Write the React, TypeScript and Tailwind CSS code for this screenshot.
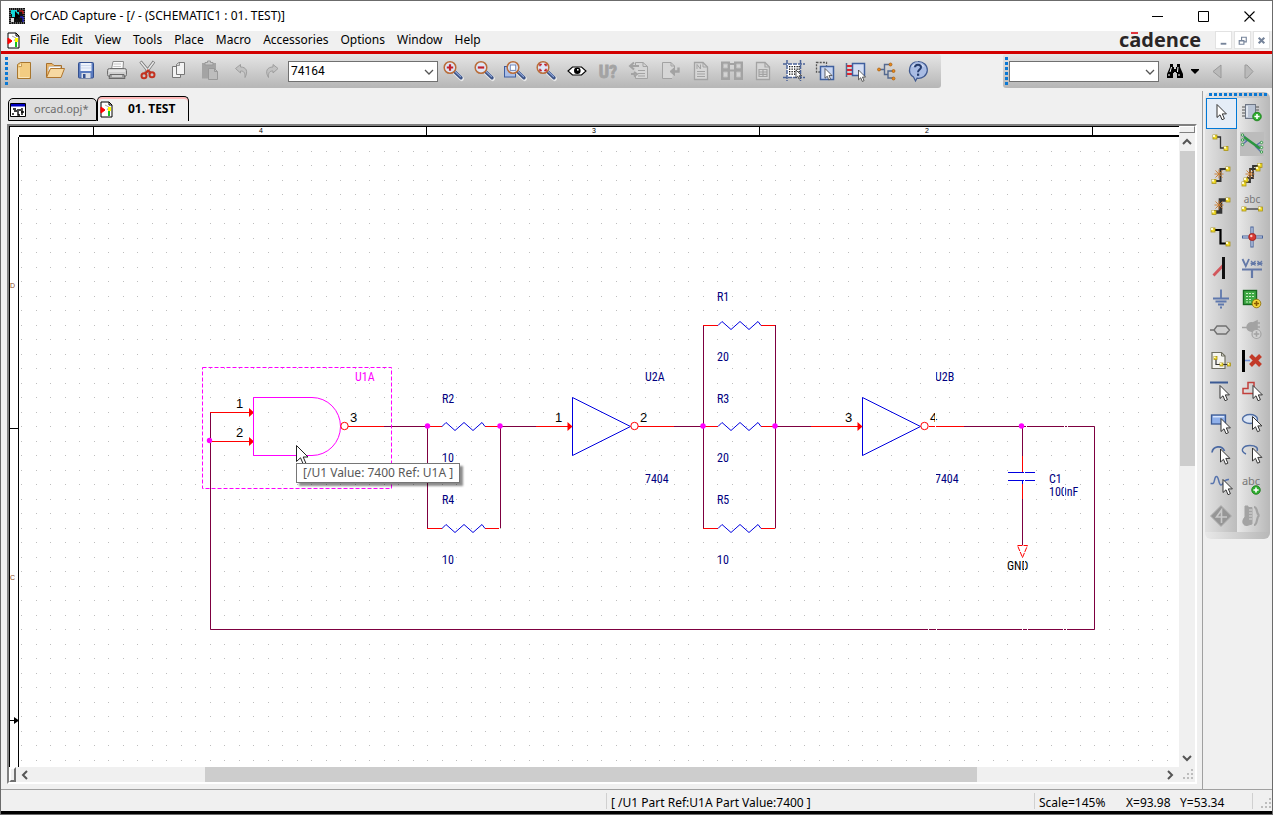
import React from "react";

type IconDef = { label: string; art: React.ReactNode };

const POINTER = "M0 0V13L3 10.3L5 15.2L7.4 14.2L5.3 9.4H9.4Z";

function Icon({ children }: { children: React.ReactNode }) {
  return (
    <svg width="24" height="24" viewBox="0 0 24 24" fill="none" className="shrink-0 overflow-visible" aria-hidden="true">
      {children}
    </svg>
  );
}

function Pointer({ x, y }: { x: number; y: number }) {
  return <path d={POINTER} transform={`translate(${x} ${y})`} fill="#fff" stroke="#333" strokeWidth="1" />;
}

function Pad({ x, y, s = 4 }: { x: number; y: number; s?: number }) {
  return (
    <g>
      <rect x={x - s / 2} y={y - s / 2} width={s} height={s} fill="#f0dc28" stroke="#a8921a" strokeWidth="0.8" />
      <rect x={x - s / 2} y={y - s / 2} width={s / 2} height={s / 2} fill="#fffbd0" />
    </g>
  );
}

function Spark({ x, y }: { x: number; y: number }) {
  return (
    <path
      d={`M${x - 4.5} ${y}h9M${x} ${y - 4.5}v9M${x - 3.5} ${y - 3.5}l7 7M${x + 3.5} ${y - 3.5}l-7 7`}
      stroke="#c8792a"
      strokeWidth="0.9"
    />
  );
}

function Plus({ x, y, color, ring }: { x: number; y: number; color: string; ring: string }) {
  return (
    <g>
      <circle cx={x} cy={y} r="4.3" fill={color} stroke={ring} strokeWidth="0.8" />
      <path d={`M${x - 2.6} ${y}h5.2M${x} ${y - 2.6}v5.2`} stroke={ring === "#8a6a00" ? "#8a5a00" : "#fff"} strokeWidth="1.6" />
    </g>
  );
}

function Lens({ children }: { children?: React.ReactNode }) {
  return (
    <g>
      <path d="M13.5 13L20.5 19.5" stroke="#e9e9e9" strokeWidth="5" strokeLinecap="round" />
      <path d="M13.5 12.5L20 18.8" stroke="#3d5487" strokeWidth="3.4" strokeLinecap="round" />
      <path d="M14 12.2L19.6 17.6" stroke="#8fa6d8" strokeWidth="1.2" strokeLinecap="round" />
      <circle cx="9" cy="8.5" r="5.8" fill="#dfe6f6" stroke="#b96d3a" strokeWidth="1.5" />
      {children}
    </g>
  );
}

const G = "#a3a3a3";

const editIcons: IconDef[] = [
  {
    label: "New",
    art: (
      <g>
        <path d="M5.5 5.5L8.5 3.5H18.5V19.5H5.5Z" fill="#f2cc82" stroke="#a8762e" />
        <path d="M6.5 7.5H9.5V4.5" fill="#fff3d6" stroke="#b98a42" strokeWidth="0.8" />
        <path d="M7 9V18.5H17" stroke="#fbe7ba" />
      </g>
    ),
  },
  {
    label: "Open",
    art: (
      <g>
        <path d="M3.5 18V4.5H9L11 6.5H18.5V10" fill="#e9b56a" stroke="#a8702c" />
        <path d="M6 7.5H17.5V12H5Z" fill="#fafafa" stroke="#bbb" strokeWidth="0.6" />
        <path d="M3.5 18.5L7.5 9.5H21.5L18 18.5Z" fill="#f7d9a2" stroke="#b0762f" />
      </g>
    ),
  },
  {
    label: "Save",
    art: (
      <g>
        <rect x="4.5" y="3.5" width="15" height="15.5" rx="1" fill="#5b7cc0" stroke="#34508f" />
        <rect x="6.5" y="4" width="11" height="8" fill="#eef2fb" />
        <path d="M7 6.5H17M7 9H17" stroke="#c3cfe8" strokeWidth="0.8" />
        <rect x="7.5" y="14" width="9" height="5" fill="#d9dde6" />
        <rect x="9" y="15" width="2.5" height="4" fill="#34508f" />
      </g>
    ),
  },
  {
    label: "Print",
    art: (
      <g>
        <path d="M6.5 10L8 2.5H18.5L18 10Z" fill="#fafafa" stroke="#8a8a8a" />
        <path d="M8.5 5H16M8.3 7.5H16" stroke="#c6c6c6" />
        <rect x="2.5" y="9.5" width="19" height="8" rx="2" fill="#cfcfcf" stroke="#6e6e6e" />
        <path d="M4 12H20" stroke="#f5f5f5" />
        <path d="M5 15.5H19L20 19.5H4Z" fill="#9d9d9d" stroke="#696969" />
        <path d="M7 17H17" stroke="#e9e9e9" strokeWidth="1.4" />
      </g>
    ),
  },
  {
    label: "Cut",
    art: (
      <g>
        <path d="M4.5 2.5L14 14M18 2.5L9.5 14" stroke="#777" strokeWidth="3" />
        <path d="M4.8 3L14 14M17.7 3L9.5 14" stroke="#e8e8e8" strokeWidth="1.5" />
        <circle cx="8" cy="16.8" r="2.5" stroke="#c4311f" strokeWidth="2" />
        <circle cx="16" cy="15.8" r="2.5" stroke="#c4311f" strokeWidth="2" />
        <path d="M9 14.5L12 11.5L14.5 14" stroke="#c4311f" strokeWidth="2" />
      </g>
    ),
  },
  {
    label: "Copy",
    art: (
      <g fill="#f3f3f3" stroke="#777">
        <path d="M5.5 7.5H13.5V18.5H5.5Z" />
        <path d="M9.5 5.5L12 3.5H17.5V15.5H9.5Z" />
        <path d="M10 6.5H12.5V4" fill="#ccc" strokeWidth="0.7" />
      </g>
    ),
  },
  {
    label: "Paste",
    art: (
      <g>
        <rect x="4" y="4" width="14" height="15.5" fill="#a4a4a4" />
        <path d="M7 6V3.5H9.5V2H12.5V3.5H15V6Z" fill="#c8c8c8" stroke="#999" />
        <path d="M10.5 9.5H16.5L19.5 12.5V20.5H10.5Z" fill="#bdbdbd" stroke="#999" />
        <path d="M16.5 9.5V12.5H19.5" stroke="#999" />
      </g>
    ),
  },
  {
    label: "Undo",
    art: <path d="M6.5 9.5L11.5 5.5V8C17 8 19.5 12 16 18.5C16.2 13.5 15 12 11.5 12V14Z" fill="#c2c2c2" stroke="#9e9e9e" />,
  },
  {
    label: "Redo",
    art: <path d="M18 9.5L13 5.5V8C7.5 8 4.5 12 8.5 18.5C8.2 13.5 9.5 12 13 12V14Z" fill="#c2c2c2" stroke="#9e9e9e" />,
  },
];

const viewIcons: IconDef[] = [
  { label: "Zoom in", art: <Lens><path d="M5.8 8.5H12.2M9 5.3V11.7" stroke="#c3222d" strokeWidth="2.2" /></Lens> },
  { label: "Zoom out", art: <Lens><path d="M5.8 8.5H12.2" stroke="#c3222d" strokeWidth="2.2" /></Lens> },
  {
    label: "Zoom to region",
    art: (
      <g>
        <rect x="1.5" y="7.5" width="11" height="10.5" fill="#a9bde6" stroke="#3c5da0" />
        <g transform="translate(1 0)"><Lens><rect x="6.3" y="6" width="5.4" height="5.4" fill="#fff" stroke="#7288ba" /></Lens></g>
      </g>
    ),
  },
  {
    label: "Zoom to all",
    art: (
      <Lens>
        <path d="M6 7.3V5.5H7.8M10.2 5.5H12V7.3M12 9.7V11.5H10.2M7.8 11.5H6V9.7" stroke="#c3222d" strokeWidth="1.5" />
      </Lens>
    ),
  },
  {
    label: "View",
    art: (
      <g>
        <path d="M3 12L7.5 8H16.5L21 12L16.5 16H7.5Z" fill="#fff" stroke="#000" strokeWidth="1.1" />
        <circle cx="12.3" cy="11.8" r="3.3" fill="#000" />
        <rect x="12" y="10" width="1.6" height="1.6" fill="#fff" />
      </g>
    ),
  },
  {
    label: "Annotate",
    art: (
      <text x="12" y="19" textAnchor="middle" fontSize="18" fontWeight="bold" fill={G} stroke={G} strokeWidth="0.8" fontFamily="Roboto Condensed, Liberation Sans, sans-serif">
        U?
      </text>
    ),
  },
  {
    label: "Back annotate",
    art: (
      <g stroke={G}>
        <path d="M8.5 7V3.5H16L20.5 7.5V19.5H8.5V16" fill="#d6d6d6" />
        <path d="M16 3.5V7.5H20.5M11 11.5H18M11 14.5H18M11 17H18" />
        <path d="M12 7H4M7 3.5L3 7L7 10.5M4 15H8M7 13L10 15L7 17.5" strokeWidth="2" />
      </g>
    ),
  },
  {
    label: "Design rules check",
    art: (
      <g stroke={G}>
        <path d="M14 19.5H4.5V3.5H13L16.5 7V10" fill="#d6d6d6" />
        <path d="M13 3.5V7H16.5" />
        <path d="M20.5 8.5V12.5H16" strokeWidth="2.4" />
        <path d="M16.5 8.5L12 12.5L16.5 16.5Z" fill={G} />
      </g>
    ),
  },
  {
    label: "Create netlist",
    art: (
      <g stroke={G}>
        <path d="M5.5 3.5H14L18.5 8V20.5H5.5Z" fill="#d6d6d6" strokeWidth="1.3" />
        <path d="M8 10V5.5L11.5 10V5.5M14 3.5V8H18.5M8 12.5H16M8 15H16M8 17.5H16" />
      </g>
    ),
  },
  {
    label: "Cross reference",
    art: (
      <g>
        <path d="M1 2.5H10V21H1ZM14 2.5H23V21H14Z" fill={G} />
        <path d="M3.5 5H7.5V9H3.5ZM3.5 13H7.5V18H3.5ZM16.5 5H20.5V9H16.5ZM16.5 13H20.5V18H16.5Z" fill="#d3d3d3" stroke="#bdbdbd" />
        <path d="M9 11.5H15M10 5H14" stroke={G} strokeWidth="2" />
      </g>
    ),
  },
  {
    label: "Bill of materials",
    art: (
      <g stroke={G}>
        <path d="M5.5 3.5H14L18.5 8V20.5H5.5Z" fill="#d6d6d6" strokeWidth="1.3" />
        <path d="M14 3.5V8H18.5M8 10.5H16V17.5H8ZM8 13H16M8 15.3H16M12 10.5V17.5" strokeWidth="1.2" />
      </g>
    ),
  },
  {
    label: "Snap to grid",
    art: (
      <g>
        <rect x="5" y="5" width="13" height="13" fill="#fff" />
        <path d="M5 1V22M18.5 1V22M1 5H23M1 18.5H23" stroke="#4b6398" strokeWidth="1.5" strokeDasharray="4 1" />
        <g fill="#111">
          {[7, 9.5, 12, 14.5].map((y) => [7, 9.5, 12, 14.5, 16.5].map((x) => <rect key={`${x}-${y}`} x={x} y={y} width="1.3" height="1.3" />))}
        </g>
        <g transform="translate(14 11) scale(0.6)"><path d={POINTER} fill="#fff" stroke="#333" strokeWidth="1.3" /></g>
      </g>
    ),
  },
  {
    label: "Area select",
    art: (
      <g>
        <rect x="3.5" y="3.5" width="10" height="9.5" stroke="#555" strokeWidth="1.3" strokeDasharray="2 1.2" />
        <rect x="7.5" y="7.5" width="13" height="13" fill="#c9d6f1" stroke="#3f5f9e" strokeWidth="1.5" />
        <g transform="translate(12 9.5) scale(0.75)"><path d={POINTER} fill="#fff" stroke="#333" /></g>
      </g>
    ),
  },
  {
    label: "Drag connected object",
    art: (
      <g>
        <path d="M2.5 4V18" stroke="#52668f" strokeWidth="1.5" />
        <path d="M3 7H9M3 11H9M3 15H9" stroke="#dc2430" strokeWidth="1.8" />
        <rect x="8.5" y="4.5" width="12" height="12" fill="#d4def4" stroke="#3f5f9e" strokeWidth="1.5" />
        <g transform="translate(14.5 11) scale(0.75)"><path d={POINTER} fill="#fff" stroke="#333" /></g>
      </g>
    ),
  },
  {
    label: "Project manager",
    art: (
      <g>
        <path d="M4 10.5H9M16 5.5H9.5V15.5H13M18 12H13V19H18" stroke="#54698f" strokeWidth="1.4" />
        <g fill="#e8891c" stroke="#a55b0b" strokeWidth="0.7">
          <circle cx="4" cy="10.5" r="1.5" />
          <circle cx="15.5" cy="5.5" r="1.5" />
          <circle cx="18.5" cy="12" r="1.5" />
          <circle cx="18.5" cy="19.5" r="1.5" />
        </g>
      </g>
    ),
  },
  {
    label: "Help",
    art: (
      <g>
        <path d="M12 2.5A9 8.4 0 1 1 11 19.2L9.5 22L7.5 18A8.5 8.4 0 0 1 12 2.5Z" fill="#a9bce4" stroke="#3f5990" strokeWidth="1.2" />
        <path d="M5.5 8A7 5 0 0 1 18.5 8A12 8 0 0 0 5.5 8Z" fill="#dfe7f8" />
        <path d="M9 8.2C9 4.8 15 4.8 15 8.2C15 10.4 12 10.6 12 13.2" stroke="#243b6d" strokeWidth="2" />
        <rect x="11" y="14.6" width="2.2" height="2.2" fill="#243b6d" />
      </g>
    ),
  },
];

const palette: IconDef[] = [
  { label: "Select", art: <Pointer x={8} y={3.5} /> },
  {
    label: "Place part",
    art: (
      <g>
        <path d="M2 6H19M2 9H19M2 12H19M2 15H19" stroke="#555" strokeWidth="1.2" />
        <rect x="5.5" y="3.5" width="10" height="14" fill="#b9c3d3" stroke="#6e7684" />
        <path d="M7 5V16" stroke="#eef2f8" strokeWidth="1.5" />
        <Plus x={17} y={15.5} color="#2fae2f" ring="#157a15" />
      </g>
    ),
  },
  { label: "Place wire", art: <g><path d="M6 5H11.5V16H17" stroke="#333" strokeWidth="1.3" /><Pad x={6} y={5} /><Pad x={17} y={16.5} /></g> },
  {
    label: "Auto wire two points",
    art: (
      <g>
        <rect x="0" y="0" width="24" height="24" fill="#bcbcbc" />
        <path d="M3 3L8 8M3 8H8M3 12L8 8M15 14L21 10M15 14H21M15 14L21 20" stroke="#5470a8" strokeWidth="1.2" />
        <path d="M4 5L20 16.5" stroke="#2b9540" strokeWidth="2.6" />
        <g stroke="#2b9540" fill="#e4f5e4" strokeWidth="0.9">
          <circle cx="2.5" cy="3" r="1.2" /><circle cx="2.5" cy="8" r="1.2" /><circle cx="2.5" cy="12.5" r="1.2" />
          <circle cx="21.5" cy="10.5" r="1.2" /><circle cx="21.5" cy="15.5" r="1.2" /><circle cx="21.5" cy="20" r="1.2" />
        </g>
      </g>
    ),
  },
  { label: "Auto wire multiple points", art: <g><path d="M18 6H11.5V18H5" stroke="#333" strokeWidth="2" /><Spark x={10} y={11} /><Pad x={19} y={6} s={4} /><Pad x={5} y={18.5} s={4} /></g> },
  {
    label: "Connect to bus",
    art: (
      <g>
        <path d="M19 3H13V15H7M17 6H10V19H4" stroke="#333" strokeWidth="1.8" />
        <Spark x={10} y={11} />
        <Pad x={20} y={2.5} s={4} /><Pad x={18} y={6} s={4} /><Pad x={6} y={17} s={4} /><Pad x={4} y={21} s={4} />
      </g>
    ),
  },
  { label: "Auto wire to bus", art: <g><path d="M18 6H11.5V18H5" stroke="#333" strokeWidth="3.6" /><Spark x={10} y={11} /><Pad x={19} y={6} s={4} /><Pad x={5} y={18.5} s={4} /></g> },
  {
    label: "Place net alias",
    art: (
      <g>
        <text x="12" y="9" textAnchor="middle" fontSize="10" fill="#777" fontFamily="Noto Sans, sans-serif">abc</text>
        <path d="M4 15H21" stroke="#333" strokeWidth="1.2" /><Pad x={4} y={15} /><Pad x={20.5} y={15} />
      </g>
    ),
  },
  { label: "Place bus", art: <g><path d="M4 5H11.5V18.5H18" stroke="#000" strokeWidth="2.2" /><Pad x={4} y={5} /><Pad x={19} y={19} /></g> },
  {
    label: "Place junction",
    art: (
      <g>
        <path d="M12 1.5V22.5M2 12H23" stroke="#48639a" strokeWidth="3.2" />
        <path d="M12 2.5V21.5M3 12H22" stroke="#dbe5f7" strokeWidth="1.1" />
        <circle cx="12.3" cy="12" r="3.6" fill="#d73a34" stroke="#9d1b17" strokeWidth="0.8" />
        <circle cx="11.3" cy="11" r="1.2" fill="#fbc9c4" />
      </g>
    ),
  },
  { label: "Place bus entry", art: <g><path d="M4.5 19.5L14 9.5" stroke="#d2575c" strokeWidth="2.8" /><path d="M14.5 1V23" stroke="#111" strokeWidth="3" /></g> },
  {
    label: "Place power",
    art: (
      <g stroke="#6479a8">
        <path d="M2.5 3L5.8 10L9 3" strokeWidth="1.8" />
        <path d="M11 5L15.5 9.5M15.5 5L11 9.5M10.5 7.3H16M17.5 5L22 9.5M22 5L17.5 9.5M17 7.3H22.5" strokeWidth="1.2" />
        <path d="M2 13.5H22M12 13.5V22" strokeWidth="2.2" />
      </g>
    ),
  },
  { label: "Place ground", art: <path d="M12 2.5V11M4 11.5H20M6.5 14.5H17.5M9 17.5H15M11 20.5H13" stroke="#5f78ad" strokeWidth="1.8" /> },
  {
    label: "Place hierarchical block",
    art: (
      <g>
        <rect x="3.5" y="3.5" width="13" height="14" fill="#3faa45" stroke="#176a20" strokeWidth="1.4" />
        <path d="M6 6.5H14M6 9.5H14M6 12.5H11M6 15H11" stroke="#c8efc4" strokeWidth="1.1" strokeDasharray="2 1" />
        <Plus x={16.5} y={16.5} color="#f5d83c" ring="#8a6a00" />
      </g>
    ),
  },
  { label: "Place port", art: <path d="M1 12H5L8 8H17L20.5 12L17 16H8L5 12" fill="#cfcfcf" stroke="#707070" strokeWidth="1.3" /> },
  {
    label: "Place pin",
    art: (
      <g>
        <path d="M2 9.5H7C7 6 10 4 13 5L17 3V11C13 15 8 13 7 9.5M17 5H20M17 9H20" fill={G} stroke={G} strokeWidth="1.6" />
        <circle cx="16.5" cy="16" r="4.5" fill="#d2d2d2" stroke={G} strokeWidth="1.2" />
        <path d="M13.7 16H19.3M16.5 13.2V18.8" stroke={G} strokeWidth="1.6" />
      </g>
    ),
  },
  {
    label: "Place off-page connector",
    art: (
      <g>
        <path d="M3 3.5H12.5L16 7V19.5H3Z" fill="#f5f5f0" stroke="#6e6e60" strokeWidth="1.2" />
        <path d="M12.5 3.5V7H16" stroke="#6e6e60" />
        <path d="M7 9V15.5H20" stroke="#333" strokeWidth="1.2" />
        <Pad x={6.5} y={9} s={3} /><Pad x={12.5} y={15.5} s={3} /><Pad x={20} y={15.5} s={3} />
      </g>
    ),
  },
  {
    label: "Place no connect",
    art: (
      <g>
        <path d="M3.5 1V23" stroke="#000" strokeWidth="3" />
        <path d="M5 11.5H10" stroke="#6f8fd8" strokeWidth="1.6" />
        <path d="M10.5 6.5L20.5 16.5M20.5 6.5L10.5 16.5" stroke="#c23a28" strokeWidth="4" />
      </g>
    ),
  },
  { label: "Place line", art: <g><path d="M1 2.5H19" stroke="#3b5a94" strokeWidth="2" /><Pointer x={11} y={5.5} /></g> },
  { label: "Place polyline", art: <g><path d="M3 8.5H8V2.5H14V13.5H3Z" stroke="#c2403c" strokeWidth="1.5" /><Pointer x={13} y={5.5} /></g> },
  { label: "Place rectangle", art: <g><rect x="2.5" y="4" width="14" height="9" fill="#8fb0ea" stroke="#3b5a94" strokeWidth="1.3" /><path d="M4 5.7H15" stroke="#d9e6fc" strokeWidth="1.5" /><Pointer x={12} y={7.5} /></g> },
  { label: "Place ellipse", art: <g><ellipse cx="10" cy="8" rx="7.5" ry="4.5" fill="#dce6f5" stroke="#4f6da4" strokeWidth="1.4" /><Pointer x={12.5} y={5.5} /></g> },
  { label: "Place arc", art: <g><path d="M3 10.5A6.5 6.5 0 0 1 15.5 9" stroke="#4b69a2" strokeWidth="1.7" /><Pointer x={11.5} y={7} /></g> },
  { label: "Place elliptical arc", art: <g><path d="M6 12C-1 9 3 3.5 10 3.5C16 3.5 18.5 6 17 9" stroke="#4f6da4" strokeWidth="1.4" /><Pointer x={12.5} y={6} /></g> },
  { label: "Place Bezier", art: <g><path d="M1.5 10.5H4C6 10 5 3.5 7.5 3.5C10 3.5 9.5 12 12 12C14.5 12 14 6 20 6.5" stroke="#5673ad" strokeWidth="1.5" /><Pointer x={14} y={6.5} /></g> },
  {
    label: "Place text",
    art: (
      <g>
        <text x="11" y="12" textAnchor="middle" fontSize="11" fill="#777" fontFamily="Noto Sans, sans-serif">abc</text>
        <Plus x={16} y={17} color="#2fae2f" ring="#157a15" />
      </g>
    ),
  },
  {
    label: "Place IEEE symbol",
    art: <g><path d="M12 1.5L22.5 12L12 22.5L1.5 12Z" fill="#969696" stroke="#b2b2b2" /><path d="M12.5 19V6L7.5 13H18" stroke="#c9c9c9" strokeWidth="1.6" /></g>,
  },
  {
    label: "Place pin array",
    art: (
      <g stroke={G}>
        <path d="M5 3V13C1 17 3 22 7 21.5L12 20V3.5H8V2H5Z" fill={G} />
        <path d="M9 6H12M9 9H12M9 12H12M9 15H12" stroke="#dadada" />
        <path d="M14 3C18 3 16 11 19.5 11.5C16 12 18 21 14 21" strokeWidth="2.2" />
      </g>
    ),
  },
];

function Chevron({ className }: { className: string }) {
  return (
    <svg viewBox="0 0 10 10" className={className} fill="none" stroke="#555" strokeWidth="1.3" aria-hidden="true">
      <path d="M1 3L5 7L9 3" />
    </svg>
  );
}

function Combo({ label, options }: { label: string; options: string[] }) {
  return (
    <div className="relative h-[21px] w-[150px]">
      <select
        aria-label={label}
        className="block h-[21px] w-full appearance-none border border-[#707070] bg-white pl-[2px] pr-5 font-['Roboto',sans-serif] text-xs text-black outline-none"
      >
        {options.map((o) => (
          <option key={o}>{o}</option>
        ))}
      </select>
      <Chevron className="pointer-events-none absolute right-1 top-[6px] h-[10px] w-[10px]" />
    </div>
  );
}

function ToolButton({ def }: { def: IconDef }) {
  return (
    <button type="button" aria-label={def.label} className="flex h-8 w-[31px] items-center justify-start pl-[3px]">
      <Icon>{def.art}</Icon>
    </button>
  );
}

function DocIcon() {
  return (
    <svg width="13" height="17" viewBox="0 0 13 17" className="shrink-0" aria-hidden="true">
      <path d="M1 1H9L12 4V16H1Z" fill="#fff" stroke="#000" />
      <path d="M9 1V4H12" fill="none" stroke="#000" />
      <path d="M1 6L5 9L1 12Z" fill="#f00" stroke="#f00" />
      <path d="M5 4L9 6L7 9" fill="none" stroke="#aaa" />
      <path d="M8 6H11V10H8Z" fill="#ff0" />
      <path d="M8 10H10V15H8Z" fill="#16c020" />
    </svg>
  );
}

function Resistor({ x, y }: { x: number; y: number }) {
  return (
    <g fill="none">
      <path d={`M${x} ${y}h15M${x + 58} ${y}h14`} stroke="#f00" />
      <path d={`M${x + 15} ${y}l4 -4l9 8l9 -8l9 8l9 -8l3 4`} stroke="#0000e0" />
    </g>
  );
}

function Inverter({ x }: { x: number }) {
  return (
    <g>
      <path d={`M${x} 397.5L${x} 455.5L${x + 58} 426.5Z`} fill="none" stroke="#0000e0" />
      <path d={`M${x - 5} 422L${x} 426.5L${x - 5} 431Z`} fill="#f00" />
      <circle cx={x + 62} cy="426" r="3.7" fill="#fff" stroke="#f00" />
    </g>
  );
}

const partLabels: [number, number, string][] = [
  [442, 403, "R2"], [442, 462, "10"], [442, 504, "R4"], [442, 564, "10"],
  [645, 381, "U2A"], [645, 483, "7404"],
  [717, 301, "R1"], [717, 361, "20"], [717, 403, "R3"], [717, 462, "20"], [717, 504, "R5"], [717, 564, "10"],
  [935, 381, "U2B"], [935, 483, "7404"], [1049, 483, "C1"], [1049, 496, "100nF"],
];

const pinLabels: [number, number, string][] = [
  [236, 408, "1"], [236, 437, "2"], [350, 422, "3"], [555, 422, "1"], [640, 422, "2"], [845, 422, "3"], [930, 422, "4"],
];

function Schematic() {
  return (
    <svg className="block h-full w-full" role="img" aria-label="Schematic page">
      <defs>
        <pattern id="dots" width="29" height="29" patternUnits="userSpaceOnUse" x="21" y="151">
          <path d="M0 0H1V1H0ZM15 0H16V1H15ZM0 14H1V15H0ZM15 14H16V15H15Z" fill="#bdbdbd" />
        </pattern>
      </defs>
      <g transform="translate(-9 -126)">
        <rect x="19" y="137" width="3000" height="3000" fill="url(#dots)" />
        <path d="M9 126.5H3000M9.5 126V3000M18.5 137V3000" stroke="#000" />
        <path d="M19 136H3000" stroke="#000" strokeWidth="2" />
        <path d="M93.5 127V135M426.5 127V135M759.5 127V135M1092.5 127V135M9 428.5H18M9 720.5H15" stroke="#000" />
        <path d="M14 717L19 720.5L14 724Z" fill="#000" />
        <g fontFamily="Liberation Sans, sans-serif" fontSize="7" fill="#000">
          <text x="259" y="133">4</text>
          <text x="592" y="133">3</text>
          <text x="925" y="133">2</text>
          <text x="10" y="288" fill="#8a4a20">D</text>
          <text x="10" y="580" fill="#8a4a20">C</text>
        </g>

        <g fill="none" stroke="#7d0040">
          <path d="M210.5 412V629.5H1094.5V426.5H964" />
          <path d="M384 426.5H428M427.5 426V528M500.5 528V426.5H536M674 426.5H703M775 426.5H811" />
          <path d="M703.5 325V528M775.5 325V528M1022.5 426V456M1022.5 499V545" />
        </g>
        <g fill="none" stroke="#f00">
          <path d="M210 412.5H250M210 441.5H250M348 426.5H384M536 426.5H568M638 426.5H674M811 426.5H858M929 426.5H964" />
          <path d="M1022.5 456V472M1022.5 484V499" />
          <path d="M1017.5 545.5H1027.5L1022.5 557.5Z" strokeDasharray="5 1" />
        </g>
        <path d="M249 408L254 412.5L249 417ZM249 437L254 441.5L249 446Z" fill="#f00" />

        <rect x="202.5" y="367.5" width="189" height="121" fill="none" stroke="#f0f" strokeDasharray="4 2" />
        <path d="M312 397.5H253.5V455.5H312A28.5 29 0 0 0 312 397.5Z" fill="none" stroke="#f0f" />
        <circle cx="344.5" cy="426" r="3.7" fill="#fff" stroke="#f00" />

        <Resistor x={427} y={426.5} />
        <Resistor x={427} y={528.5} />
        <Resistor x={703} y={325.5} />
        <Resistor x={703} y={426.5} />
        <Resistor x={703} y={528.5} />
        <Inverter x={572.5} />
        <Inverter x={862.5} />
        <path d="M1008 472.5H1035M1008 480.5H1035M1022.5 480V484" stroke="#0000e0" />

        <g fill="#f0f">
          <circle cx="209.5" cy="440.5" r="2.7" />
          <circle cx="427.5" cy="426" r="2.7" />
          <circle cx="500" cy="426" r="2.7" />
          <circle cx="703" cy="426" r="2.7" />
          <circle cx="775" cy="426" r="2.7" />
          <circle cx="1021.5" cy="426" r="2.7" />
        </g>

        <g fontFamily="Roboto Condensed, Open Sans Condensed, Liberation Sans, sans-serif" fontSize="12" fill="#000080">
          {partLabels.map(([x, y, t]) => (
            <text key={`${x}-${y}`} x={x} y={y}>{t}</text>
          ))}
          <text x="355" y="381" fill="#f0f">U1A</text>
          <text x="1007" y="570" fill="#000">GND</text>
        </g>
        <g fontFamily="Liberation Sans, sans-serif" fontSize="13" fill="#000">
          {pinLabels.map(([x, y, t]) => (
            <text key={`${x}-${y}`} x={x} y={y}>{t}</text>
          ))}
        </g>

        <g fill="#fff">
          <path d="M935 368H936V384H935ZM935 410H936V430H935ZM935 470H936V486H935ZM928 626H929V632H928ZM936 626H937V632H936Z" />
          <path d="M1026 424H1027V430H1026ZM1024 470H1025V483H1024ZM1024 558H1025V573H1024ZM1022 627H1023V632H1022ZM1027 627H1028V632H1027Z" />
          <path d="M1064 424H1065V430H1064ZM1067 424H1068V430H1067ZM1064 485H1065V498H1064ZM1063 627H1064V632H1063ZM1066 627H1067V632H1066Z" />
        </g>
        <path d="M296.5 445.5V461.5L300.5 457.8L303 463.5H306L303.2 457H308Z" fill="#fff" stroke="#222" />
      </g>
    </svg>
  );
}

function Grip() {
  return (
    <svg width="11" height="11" viewBox="0 0 11 11" fill="#bdbdbd" aria-hidden="true">
      <path d="M8 0h2v2h-2zM4 4h2v2h-2zM8 4h2v2h-2zM0 8h2v2h-2zM4 8h2v2h-2zM8 8h2v2h-2z" />
    </svg>
  );
}

function Dots({ horizontal = false }: { horizontal?: boolean }) {
  return horizontal ? (
    <svg height="4" className="block w-full" aria-hidden="true">
      <line x1="0" y1="1.5" x2="59" y2="1.5" stroke="#0a78d4" strokeWidth="3" strokeDasharray="3 2" />
    </svg>
  ) : (
    <svg width="4" height="28" className="block shrink-0" aria-hidden="true">
      <line x1="1.5" y1="0" x2="1.5" y2="28" stroke="#0a78d4" strokeWidth="3" strokeDasharray="3 2" />
    </svg>
  );
}

function SearchBar() {
  return (
    <div className="flex h-[34px] w-[269px] items-center rounded-l-[3px] bg-linear-to-b from-[#e6e6e6] to-[#b6b6b6] pl-[2px]">
      <Dots />
      <Combo label="Find" options={[""]} />
      <button type="button" aria-label="Find" className="ml-[6px] flex h-6 w-5 items-center justify-center">
        <svg width="16" height="14" viewBox="0 0 16 14" aria-hidden="true">
          <path d="M3 0H6V3H7V5H9V3H10V0H13V3L16 10V14H10V9H9V8H7V9H6V14H0V10L3 3Z" fill="#000" />
          <path d="M4.5 3L3 8M11 3L10.5 8M2 10V12M12 10V12" stroke="#fff" strokeWidth="1" />
        </svg>
      </button>
      <button type="button" aria-label="Find options" className="flex h-6 w-5 items-center justify-center">
        <svg width="8" height="5" viewBox="0 0 8 5" aria-hidden="true"><path d="M0 0H8V1L4 5L0 1Z" /></svg>
      </button>
      <button type="button" aria-label="Find previous" className="flex h-6 w-6 items-center justify-center">
        <svg width="10" height="15" viewBox="0 0 10 15" aria-hidden="true"><path d="M9 1V14L1 7.5Z" fill="#bababa" stroke="#999" /></svg>
      </button>
      <button type="button" aria-label="Find next" className="ml-2 flex h-6 w-6 items-center justify-center">
        <svg width="10" height="15" viewBox="0 0 10 15" aria-hidden="true"><path d="M1 1V14H3L9 7.5L3 1Z" fill="#bababa" stroke="#999" /></svg>
      </button>
    </div>
  );
}

const menus = ["File", "Edit", "View", "Tools", "Place", "Macro", "Accessories", "Options", "Window", "Help"];

export default function App() {
  return (
    <div className="flex h-screen flex-col overflow-hidden border border-[#6b6b6b] bg-[#f0f0f0] font-['Noto_Sans',sans-serif] text-xs text-black">
      <header className="flex h-[30px] shrink-0 items-center bg-white pl-2">
        <svg width="16" height="16" viewBox="0 0 16 16" className="shrink-0" aria-hidden="true">
          <rect width="16" height="16" fill="#111" />
          <path d="M1 1H15V15H1Z" fill="none" stroke="#aaa" strokeDasharray="1 1" />
          <path d="M2 2H8V4H10V9H3V6H2Z" fill="#14d8d8" />
          <path d="M6 3L12 9L9 9L11 13L8 10L6 12Z" fill="#000" />
          <path d="M10 3H14V6" fill="none" stroke="#f22" />
          <path d="M11 9H14V14" fill="none" stroke="#22f" />
          <path d="M2 10H5V14H2Z" fill="#ddd" />
        </svg>
        <h1 className="ml-[5px] flex-1 text-xs">OrCAD Capture - [/ - (SCHEMATIC1 : 01. TEST)]</h1>
        <button type="button" aria-label="Minimize" className="flex h-full w-[46px] items-center justify-center">
          <svg width="11" height="11" aria-hidden="true"><path d="M0 5.5H11" stroke="#000" /></svg>
        </button>
        <button type="button" aria-label="Maximize" className="flex h-full w-[46px] items-center justify-center">
          <svg width="11" height="11" aria-hidden="true"><path d="M.5 .5H10.5V10.5H.5Z" fill="none" stroke="#000" /></svg>
        </button>
        <button type="button" aria-label="Close" className="flex h-full w-[46px] items-center justify-center">
          <svg width="11" height="11" aria-hidden="true"><path d="M.5 .5L10.5 10.5M10.5 .5L.5 10.5" stroke="#000" strokeWidth="1.1" /></svg>
        </button>
      </header>

      <div className="flex h-5 shrink-0 items-center pb-[2px] pl-[6px]">
        <DocIcon />
        <nav className="ml-1 flex flex-1">
          {menus.map((m) => (
            <button key={m} type="button" className="h-[18px] px-[6px] leading-4">{m}</button>
          ))}
        </nav>
        <div className="relative mr-[14px] flex h-5 items-center font-['Open_Sans',sans-serif] text-xl font-bold leading-5 text-[#2a2526]">
          <span>c</span>
          <span className="relative">
            a
            <span className="absolute left-[2px] top-[2px] h-[2px] w-[7px] bg-[#e0343c]" />
          </span>
          <span>dence</span>
        </div>
        <div className="flex gap-[2px] pr-[2px]">
          {[
            { l: "Minimize document", d: "M5 12H11", w: 2 },
            { l: "Restore document", d: "M7 8V5H12V10H10M4.5 8.5H9.5V12.5H4.5ZM4 9H10", w: 1.2 },
            { l: "Close document", d: "M5 5.5L11 11.5M11 5.5L5 11.5", w: 2.2 },
          ].map((b) => (
            <button key={b.l} type="button" aria-label={b.l} className="flex h-[18px] w-[17px] items-center justify-center border border-[#e2e2e2] bg-white">
              <svg width="15" height="16" viewBox="0 0 16 16" className="shrink-0" fill="none" stroke="#76849a" strokeWidth={b.w} aria-hidden="true"><path d={b.d} /></svg>
            </button>
          ))}
        </div>
      </div>
      <div className="h-[3px] shrink-0 bg-[#d20000]" />

      <div className="flex shrink-0 justify-between">
        <div className="flex h-[34px] items-center rounded-r-[3px] bg-linear-to-b from-[#e6e6e6] to-[#b6b6b6] pl-[4px] pr-[7px]">
          <Dots />
          <div className="flex">{editIcons.map((d) => <ToolButton key={d.label} def={d} />)}</div>
          <Combo label="Part" options={["74164"]} />
          <div className="flex">{viewIcons.map((d) => <ToolButton key={d.label} def={d} />)}</div>
        </div>
        <SearchBar />
      </div>

      <div className="flex min-h-0 flex-1">
        <div className="mt-[3px] flex min-w-0 flex-1 flex-col border-r border-[#a0a0a0] pb-[5px] pl-[6px] pr-[5px]">
          <div role="tablist" className="flex h-[33px] shrink-0 items-start pl-px pt-[5px]">
            <button type="button" role="tab" aria-selected="false" className="mt-[2px] flex h-[23px] w-[89px] items-center gap-2 whitespace-nowrap rounded-t-[5px] border border-black bg-[#dedede] pl-px text-[11px] text-[#6d6d6d]">
              <svg width="16" height="14" viewBox="0 0 16 14" className="shrink-0" aria-hidden="true">
                <path d="M.5 .5H15.5V13.5H.5Z" fill="#fff" stroke="#000" />
                <path d="M1 1H15V3.5H1Z" fill="#0000c0" />
                <path d="M3 6H6M4 8H7M3 10V12M8 6V12H10M9 7H11M12 5V12M11 9H14" stroke="#000" strokeWidth="1.4" fill="none" />
              </svg>
              orcad.opj*
            </button>
            <button type="button" role="tab" aria-selected="true" className="flex h-[25px] w-[92px] items-center gap-[15px] whitespace-nowrap rounded-t-[5px] border border-b-0 border-black bg-[#f0f0f0] pl-[2px] font-bold shadow-[inset_0_2px_0_#ffb9b9]">
              <DocIcon />
              01. TEST
            </button>
          </div>

          <div className="flex min-h-0 flex-1 flex-col border-2 border-b-2 border-b-white border-l-[#808080] border-r-white border-t-[#808080]">
            <div className="flex min-h-0 flex-1">
              <div className="relative min-w-0 flex-1 overflow-hidden bg-white">
                <Schematic />
                <div role="tooltip" className="absolute left-[287px] top-[337px] whitespace-nowrap border border-[#767676] bg-white px-[6px] text-xs leading-[18px] text-[#575757] shadow-[3px_3px_2px_rgba(0,0,0,0.45)]">
                  [/U1 Value: 7400 Ref: U1A ]
                </div>
              </div>
              <div className="flex w-4 shrink-0 flex-col items-center">
                <div className="h-[7px] w-full border border-[#808080] border-l-white border-t-white bg-[#f0f0f0]" />
                <Chevron className="my-[4px] h-[10px] w-[10px] rotate-180 stroke-2" />
                <div className="flex w-full flex-1 flex-col pl-px">
                  <div className="basis-[315px] bg-[#cdcdcd]" />
                </div>
                <Chevron className="my-1 h-[10px] w-[10px] stroke-2" />
              </div>
            </div>
            <div className="flex h-[15px] shrink-0 items-center">
              <div className="h-full w-[7px] border-2 border-[#707070] border-l-white border-t-white bg-[#f0f0f0]" />
              <Chevron className="ml-1 h-[10px] w-[10px] rotate-90 stroke-2" />
              <div className="flex h-[15px] flex-1 self-start pl-[175px] pr-[188px]">
                <div className="flex-1 bg-[#cdcdcd]" />
              </div>
              <Chevron className="h-[10px] w-[10px] -rotate-90 stroke-2" />
              <div className="ml-2 mr-px flex"><Grip /></div>
            </div>
          </div>
        </div>

        <aside className="w-[69px] shrink-0 pl-[2px] pt-[4px]">
          <div className="relative w-[65px] rounded-[6px] bg-linear-to-r from-[#e8e8e8] to-[#b8b8b8] pb-[7px]">
            <div className="h-[6px] pl-1 pt-px"><Dots horizontal /></div>
            <div className="grid grid-cols-2 bg-[linear-gradient(90deg,#e2e2e2_0,#bcbcbc_50%,#e8e8e8_50%,#b8b8b8_100%)] pl-px pr-[2px]">
              {palette.map((d, i) => (
                <button
                  key={d.label}
                  type="button"
                  aria-label={d.label}
                  aria-pressed={i === 0}
                  className={
                    i === 0
                      ? "flex h-[31px] items-start border border-[#0078d7] bg-[#e5edf7] pl-[2px] pt-[2px]"
                      : "flex h-[31px] items-start pl-[3px] pt-[3px]"
                  }
                >
                  <Icon>{d.art}</Icon>
                </button>
              ))}
            </div>
          </div>
        </aside>
      </div>

      <footer className="flex h-[22px] shrink-0 items-stretch border-t border-[#a0a0a0] pt-px leading-5">
        <div className="my-[2px] flex-1" />
        <div className="my-[2px] flex w-[428px] items-center border-l border-[#d0d0d0] pl-1 pt-[3px]">[ /U1 Part Ref:U1A Part Value:7400 ]</div>
        <div className="my-[2px] flex w-[218px] items-center border-l border-[#d0d0d0] pl-1 pt-[3px]">
          <span className="w-[87px]">Scale=145%</span>
          <span className="w-[54px]">X=93.98</span>
          <span>Y=53.34</span>
        </div>
        <div className="my-[2px] flex w-5 items-end justify-end border-l border-[#d0d0d0]"><Grip /></div>
      </footer>
      <div className="h-[3px] shrink-0 bg-black" />
    </div>
  );
}
